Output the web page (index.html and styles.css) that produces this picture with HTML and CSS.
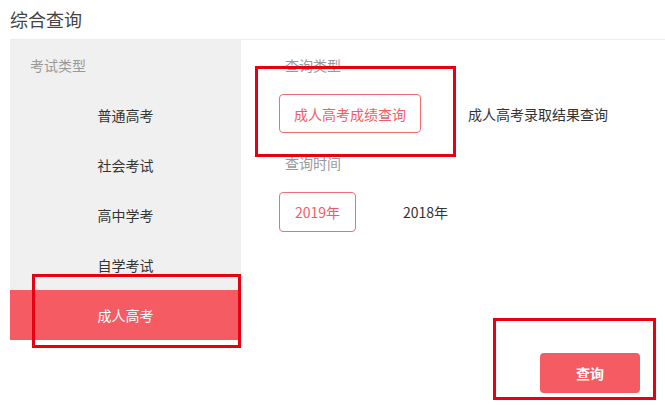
FILE: index.html
```html
<!DOCTYPE html>
<html lang="zh">
<head>
<meta charset="utf-8">
<title>综合查询</title>
<link rel="stylesheet" href="styles.css">
</head>
<body>
<div class="page">
  <div class="title">综合查询</div>
  <div class="main">
    <div class="sidebar">
      <div class="side-head">考试类型</div>
      <div class="side-item">普通高考</div>
      <div class="side-item">社会考试</div>
      <div class="side-item">高中学考</div>
      <div class="side-item">自学考试</div>
      <div class="side-item active">成人高考</div>
    </div>
    <div class="content">
      <div class="label">查询类型</div>
      <div class="options row1">
        <div class="opt selected w1">成人高考成绩查询</div>
        <div class="opt">成人高考录取结果查询</div>
      </div>
      <div class="label label2">查询时间</div>
      <div class="options row2">
        <div class="opt selected w2">2019年</div>
        <div class="opt">2018年</div>
      </div>
    </div>
  </div>
  <div class="footer">
    <button class="query-btn">查询</button>
  </div>
  <div class="mark mark1"></div>
  <div class="mark mark2"></div>
  <div class="mark mark3"></div>
</div>
</body>
</html>
```

FILE: styles.css
```css
* { box-sizing: border-box; }
html, body { margin: 0; padding: 0; background: #fff; }
body {
  font-family: "Noto Sans CJK SC", "Noto Sans", "Liberation Sans", sans-serif;
  font-size: 14px;
  color: #333;
  width: 665px;
  height: 405px;
  overflow: hidden;
}
.page { position: relative; width: 665px; height: 405px; }
.title {
  margin-left: 10px;
  height: 40px;
  line-height: 38px;
  font-size: 18px;
  color: #444;
  border-bottom: 1px solid #ececec;
}
.main { display: flex; margin-left: 10px; }
.sidebar { width: 231px; background: #f0f0f0; }
.side-head {
  height: 50px;
  line-height: 50px;
  padding-left: 20px;
  color: #999;
}
.side-item {
  height: 50px;
  line-height: 50px;
  text-align: center;
  color: #333;
}
.side-item.active { background: #f45b63; color: #fff; }
.content { flex: 1; padding-left: 38px; padding-top: 15px; }
.label { padding-left: 6px; line-height: 20px; height: 20px; color: #999; }
.label2 { margin-top: 20px; }
.options { display: flex; align-items: center; margin-top: 19px; }
.row1 .opt { height: 39px; }
.row2 .opt { height: 40px; }
.opt {
  display: flex;
  align-items: center;
  padding: 0 15px;
  border: 1px solid transparent;
  border-radius: 4px;
  margin-right: 31px;
  color: #333;
  white-space: nowrap;
}
.opt.selected { border-color: #f36d74; color: #f45b63; justify-content: center; }
.w1 { width: 142px; }
.w2 { width: 77px; }
.footer { display: flex; justify-content: flex-end; padding-right: 25px; margin-top: 13px; }
.query-btn {
  width: 100px;
  height: 40px;
  border: none;
  border-radius: 4px;
  background: #f45b63;
  color: #fff;
  font-family: inherit;
  font-size: 14px;
  font-weight: bold;
}
.mark { position: absolute; border: 3px solid #e60012; }
.mark1 { left: 255px; top: 66px; width: 201px; height: 91px; }
.mark2 { left: 32px; top: 274px; width: 209px; height: 74px; }
.mark3 { left: 493px; top: 318px; width: 163px; height: 82px; }
```
